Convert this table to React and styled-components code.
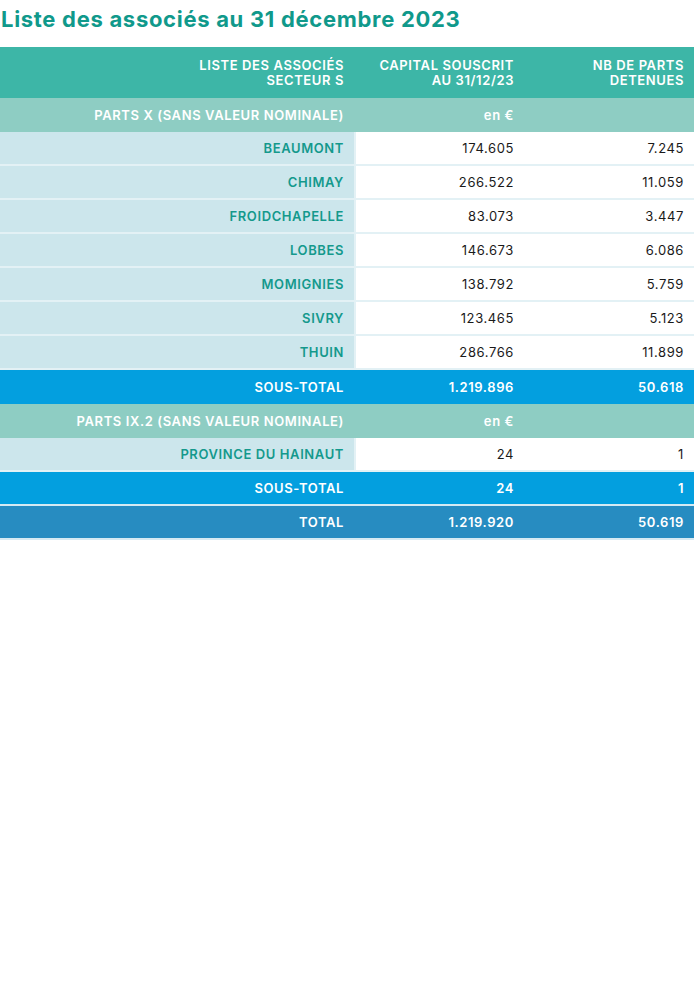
import React from "react";
import styled, { createGlobalStyle } from "styled-components";

const Global = createGlobalStyle`
  html, body { margin: 0; padding: 0; background: #ffffff; }
  body { font-family: Inter, "Open Sans", "Liberation Sans", sans-serif; }
`;

const Page = styled.div`
  width: 696px;
  padding-top: 4px;
`;

const Title = styled.h1`
  margin: 0 0 12px 0;
  padding-left: 1px;
  font-size: 22px;
  line-height: 31px;
  font-weight: 700;
  color: #10998b;
  letter-spacing: 0.7px;
`;

const Table = styled.div`
  width: 694px;
  display: flex;
  flex-direction: column;
`;

const Row = styled.div`
  display: grid;
  grid-template-columns: 356px 168px 170px;
  height: ${(p) => p.$h || 34}px;
  box-sizing: border-box;
  background: ${(p) => p.$bg};
  border-bottom: ${(p) => (p.$sep ? `2px solid ${p.$sep}` : "none")};
`;

const Cell = styled.div`
  display: flex;
  align-items: center;
  justify-content: flex-end;
  text-align: right;
  box-sizing: border-box;
  padding-right: ${(p) => p.$pr || 11}px;
  font-size: 13px;
  line-height: 15px;
  font-weight: ${(p) => p.$w || 400};
  color: ${(p) => p.$color || "#1a1a1a"};
  background: ${(p) => p.$bg || "transparent"};
  border-right: ${(p) => (p.$divider ? "2px solid #e3f1f5" : "none")};
  white-space: nowrap;
  letter-spacing: ${(p) => (p.$ls != null ? p.$ls : 0.6)}px;
`;

const HEADER = "#3db6a7";
const SUB = "#8ecdc3";
const NAME_BG = "#cce6ec";
const TEAL = "#14998c";
const SUBTOTAL = "#039fdf";
const TOTAL = "#278cc1";
const LINE = "#e3f1f5";

function HeaderRow() {
  return (
    <Row $bg={HEADER} $h={51}>
      <Cell $pr={12} $w={600} $color="#fff">LISTE DES ASSOCIÉS<br />SECTEUR S</Cell>
      <Cell $pr={10} $w={600} $color="#fff">CAPITAL SOUSCRIT<br />AU 31/12/23</Cell>
      <Cell $pr={10} $w={600} $color="#fff">NB DE PARTS<br />DETENUES</Cell>
    </Row>
  );
}

function SectionRow({ label }) {
  return (
    <Row $bg={SUB}>
      <Cell $pr={12} $w={600} $color="#fff">{label}</Cell>
      <Cell $pr={10} $w={600} $color="#fff">en €</Cell>
      <Cell />
    </Row>
  );
}

function DataRow({ name, capital, parts }) {
  return (
    <Row $bg="#fff" $sep={LINE}>
      <Cell $pr={10} $w={600} $color={TEAL} $bg={NAME_BG} $divider>{name}</Cell>
      <Cell $pr={10}>{capital}</Cell>
      <Cell $pr={10}>{parts}</Cell>
    </Row>
  );
}

function SumRow({ label, capital, parts, bg, sep }) {
  return (
    <Row $bg={bg} $sep={sep}>
      <Cell $pr={12} $w={600} $color="#fff">{label}</Cell>
      <Cell $pr={10} $w={600} $color="#fff">{capital}</Cell>
      <Cell $pr={10} $w={600} $color="#fff">{parts}</Cell>
    </Row>
  );
}

const partsX = [
  ["BEAUMONT", "174.605", "7.245"],
  ["CHIMAY", "266.522", "11.059"],
  ["FROIDCHAPELLE", "83.073", "3.447"],
  ["LOBBES", "146.673", "6.086"],
  ["MOMIGNIES", "138.792", "5.759"],
  ["SIVRY", "123.465", "5.123"],
  ["THUIN", "286.766", "11.899"],
];

export default function App() {
  return (
    <Page>
      <Global />
      <Title>Liste des associés au 31 décembre 2023</Title>
      <Table>
        <HeaderRow />
        <SectionRow label="PARTS X (SANS VALEUR NOMINALE)" />
        {partsX.map(([n, c, p]) => (
          <DataRow key={n} name={n} capital={c} parts={p} />
        ))}
        <SumRow label="SOUS-TOTAL" capital="1.219.896" parts="50.618" bg={SUBTOTAL} />
        <SectionRow label="PARTS IX.2 (SANS VALEUR NOMINALE)" />
        <DataRow name="PROVINCE DU HAINAUT" capital="24" parts="1" />
        <SumRow label="SOUS-TOTAL" capital="24" parts="1" bg={SUBTOTAL} sep="#d5eaf3" />
        <SumRow label="TOTAL" capital="1.219.920" parts="50.619" bg={TOTAL} sep="#d5eaf3" />
      </Table>
    </Page>
  );
}
